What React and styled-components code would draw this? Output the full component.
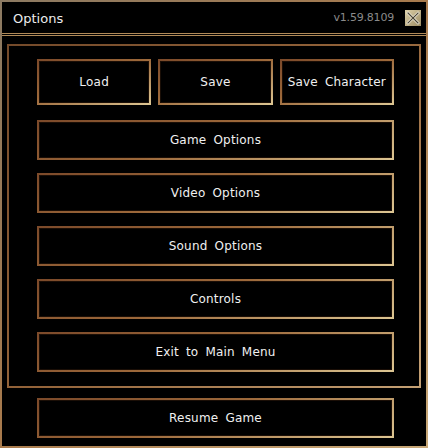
import React from "react";
import styled, { createGlobalStyle } from "styled-components";

const GlobalStyle = createGlobalStyle`
  html, body {
    margin: 0;
    padding: 0;
    background: #000;
  }
  * {
    box-sizing: border-box;
  }
`;

const topButtons = ["Load", "Save", "Save Character"];
const menuButtons = ["Game Options", "Video Options", "Sound Options", "Controls", "Exit to Main Menu"];

const CloseIcon = () => (
  <svg width="16" height="16" viewBox="0 0 16 16">
    <defs>
      <linearGradient id="closeBg" x1="0" y1="0" x2="1" y2="1">
        <stop offset="0" stopColor="#ddd0a8" />
        <stop offset="1" stopColor="#9c8c64" />
      </linearGradient>
    </defs>
    <rect x="0" y="0" width="16" height="16" fill="url(#closeBg)" />
    <path d="M3 3 L13 13 M13 3 L3 13" stroke="#f4efe0" strokeWidth="2.6" strokeLinecap="square" />
    <path d="M3 3 L13 13 M13 3 L3 13" stroke="#4a4434" strokeWidth="1.2" strokeLinecap="square" />
  </svg>
);

const OptionsWindow = () => {
  return (
    <Frame>
      <TitleBar>
        <Title>Options</Title>
        <TitleRight>
          <Version>v1.59.8109</Version>
          <CloseBtn>
            <CloseIcon />
          </CloseBtn>
        </TitleRight>
      </TitleBar>

      <Body>
        <Panel>
          <TopRow>
            {topButtons.map((label) => (
              <MenuButton key={label} $tall>{label}</MenuButton>
            ))}
          </TopRow>
          {menuButtons.map((label) => (
            <MenuButton key={label}>{label}</MenuButton>
          ))}
        </Panel>
        <ResumeWrap>
          <MenuButton>Resume Game</MenuButton>
        </ResumeWrap>
      </Body>
    </Frame>
  );
};

export default function App() {
  return (
    <>
      <GlobalStyle />
      <OptionsWindow />
    </>
  );
}

const Frame = styled.div`
  width: 428px;
  height: 448px;
  background: #000;
  border: 2px solid;
  border-image: linear-gradient(135deg, #8c7a62, #a87a4c 50%, #c8a878) 1;
  display: flex;
  flex-direction: column;
  font-family: "DejaVu Sans", "Liberation Sans", sans-serif;
`;

const TitleBar = styled.div`
  height: 34px;
  flex: none;
  display: flex;
  align-items: center;
  justify-content: space-between;
  padding: 0 5px 0 11px;
  border-bottom: 3px double #b08a58;
`;

const Title = styled.div`
  color: #ececec;
  font-size: 13px;
  padding-top: 1px;
`;

const TitleRight = styled.div`
  display: flex;
  align-items: center;
  gap: 11px;
`;

const Version = styled.div`
  color: #8a8a8a;
  font-size: 11px;
  letter-spacing: -0.2px;
`;

const CloseBtn = styled.div`
  width: 16px;
  height: 16px;
  display: flex;
`;

const Body = styled.div`
  flex: 1;
  display: flex;
  flex-direction: column;
  padding: 8px 5px 0 5px;
`;

const Panel = styled.div`
  display: flex;
  flex-direction: column;
  gap: 13px;
  padding: 13px 25px 14px 28px;
  border: 2px solid;
  border-image: linear-gradient(135deg, #744a2a, #94643a 50%, #c4a074) 1;
`;

const TopRow = styled.div`
  display: grid;
  grid-template-columns: repeat(3, 1fr);
  gap: 7px;
  margin-bottom: 2px;
`;

const ResumeWrap = styled.div`
  padding: 10px 27px 0 30px;
`;

const MenuButton = styled.div`
  flex: none;
  height: ${(p) => (p.$tall ? "46px" : "40px")};
  display: flex;
  align-items: center;
  justify-content: center;
  color: #f0f0f0;
  font-size: 12px;
  letter-spacing: 0.2px;
  word-spacing: 3px;
  background: #000;
  border: 2px solid;
  border-image: linear-gradient(160deg, #7c4a2a, #9c683a 45%, #dcc592) 1;
  box-shadow: inset 0 0 0 1px #1a0e06;
  white-space: nowrap;
`;
